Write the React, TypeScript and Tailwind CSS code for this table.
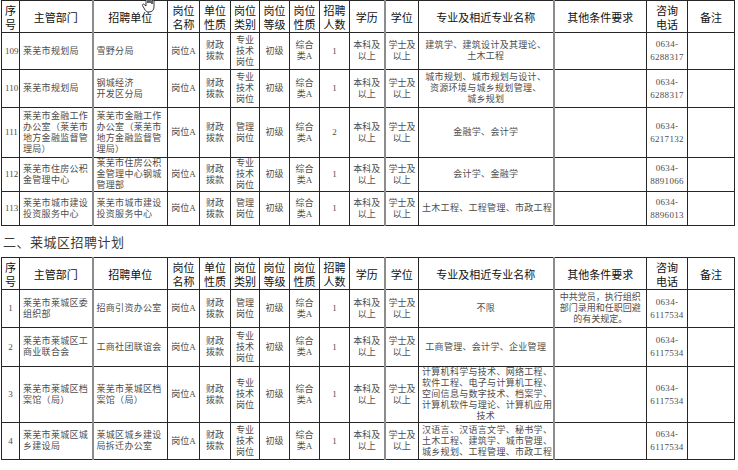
import type { ReactNode } from 'react';

type Row = {
  seq: string;
  dept: string[];
  unit: string[];
  kind: string[];
  count: string;
  major: string[];
  other?: string[];
  phone: string;
  h: string;
};

const plan1: Row[] = [
  { seq: '109', dept: ['莱芜市规划局'], unit: ['雪野分局'], kind: ['专业', '技术', '岗位'], count: '1', major: ['建筑学、建筑设计及其理论、', '土木工程'], phone: '6288317', h: 'h-[37px]' },
  { seq: '110', dept: ['莱芜市规划局'], unit: ['钢城经济', '开发区分局'], kind: ['专业', '技术', '岗位'], count: '1', major: ['城市规划、城市规划与设计、', '资源环境与城乡规划管理、', '城乡规划'], phone: '6288317', h: 'h-[38px]' },
  { seq: '111', dept: ['莱芜市金融工作', '办公室（莱芜市', '地方金融监督管', '理局）'], unit: ['莱芜市金融工作', '办公室（莱芜市', '地方金融监督管', '理局）'], kind: ['管理', '岗位'], count: '2', major: ['金融学、会计学'], phone: '6217132', h: 'h-[50px]' },
  { seq: '112', dept: ['莱芜市住房公积', '金管理中心'], unit: ['莱芜市住房公积', '金管理中心钢城', '管理部'], kind: ['专业', '技术', '岗位'], count: '1', major: ['会计学、金融学'], phone: '8891066', h: 'h-[33px]' },
  { seq: '113', dept: ['莱芜市城市建设', '投资服务中心'], unit: ['莱芜市城市建设', '投资服务中心'], kind: ['管理', '岗位'], count: '1', major: ['土木工程、工程管理、市政工程'], phone: '8896013', h: 'h-[34px]' },
];

const plan2: Row[] = [
  { seq: '1', dept: ['莱芜市莱城区委', '组织部'], unit: ['招商引资办公室'], kind: ['管理', '岗位'], count: '1', major: ['不限'], other: ['中共党员，执行组织', '部门录用和任职回避', '的有关规定。'], phone: '6117534', h: 'h-[38px]' },
  { seq: '2', dept: ['莱芜市莱城区工', '商业联合会'], unit: ['工商社团联谊会'], kind: ['专业', '技术', '岗位'], count: '1', major: ['工商管理、会计学、企业管理'], phone: '6117534', h: 'h-[39px]' },
  { seq: '3', dept: ['莱芜市莱城区档', '案馆（局）'], unit: ['莱芜市莱城区档', '案馆（局）'], kind: ['专业', '技术', '岗位'], count: '1', major: ['计算机科学与技术、网络工程、', '软件工程、电子与计算机工程、', '空间信息与数字技术、档案学、', '计算机软件与理论、计算机应用', '技术'], phone: '6117534', h: 'h-[56px]' },
  { seq: '4', dept: ['莱芜市莱城区城', '乡建设局'], unit: ['莱城区城乡建设', '局拆迁办公室'], kind: ['专业', '技术', '岗位'], count: '1', major: ['汉语言、汉语言文学、秘书学、', '土木工程、建筑学、城市管理、', '城乡规划、工程管理、市政工程'], phone: '6117534', h: 'h-[37px]' },
];

const head = [
  ['序', '号'], ['主管部门'], ['招聘单位'], ['岗位', '名称'], ['单位', '性质'], ['岗位', '类别'], ['岗位', '等级'],
  ['岗位', '性质'], ['招聘', '人数'], ['学历'], ['学位'], ['专业及相近专业名称'], ['其他条件要求'], ['咨询', '电话'], ['备注'],
];

const thick = 'border-l-2 border-l-[#8c8c8c]';

function Lines({ lines }: { lines: string[] }) {
  return (
    <>
      {lines.map((l, i) => (
        <div key={i} className="whitespace-nowrap">{l}</div>
      ))}
    </>
  );
}

function Td({ children, className = '' }: { children?: ReactNode; className?: string }) {
  return <td className={`border border-[#262626] px-[3px] py-0 align-middle whitespace-nowrap ${className}`}>{children}</td>;
}

function Plan({ rows }: { rows: Row[] }) {
  return (
    <table className="ml-[1px] w-[733px] table-fixed border-collapse">
      <colgroup>
        <col className="w-[18px]" />
        <col className="w-[73px]" />
        <col className="w-[75px]" />
        <col className="w-[32px]" />
        <col className="w-[31px]" />
        <col className="w-[29px]" />
        <col className="w-[30px]" />
        <col className="w-[30px]" />
        <col className="w-[30px]" />
        <col className="w-[35px]" />
        <col className="w-[34px]" />
        <col className="w-[135px]" />
        <col className="w-[93px]" />
        <col className="w-[41px]" />
        <col className="w-[47px]" />
      </colgroup>
      <thead>
        <tr className="h-[32px] text-[11px] leading-[14px] text-[#111] font-['Noto_Sans_CJK_SC',sans-serif]">
          {head.map((h, i) => (
            <Td key={i} className={`px-0 text-center ${i === 2 || i === 10 || i === 12 ? thick : ''}`}>
              <Lines lines={h} />
            </Td>
          ))}
        </tr>
      </thead>
      <tbody className="text-[9px] leading-[11px] text-[#4d4d4d]">
        {rows.map((r) => (
          <tr key={r.seq} className={r.h}>
            <Td className="px-0 text-center">{r.seq}</Td>
            <Td className="tracking-[0.3px]"><Lines lines={r.dept} /></Td>
            <Td className={`tracking-[0.3px] ${thick}`}><Lines lines={r.unit} /></Td>
            <Td className="px-0 text-center">岗位A</Td>
            <Td className="px-0 text-center"><Lines lines={['财政', '拨款']} /></Td>
            <Td className="px-0 text-center"><Lines lines={r.kind} /></Td>
            <Td className="px-0 text-center">初级</Td>
            <Td className="px-0 text-center"><Lines lines={['综合', '类A']} /></Td>
            <Td className="px-0 text-center">{r.count}</Td>
            <Td className="px-0 text-center"><Lines lines={['本科及', '以上']} /></Td>
            <Td className={`px-0 text-center ${thick}`}><Lines lines={['学士及', '以上']} /></Td>
            <Td className="px-[2px] text-center tracking-[0.3px]"><Lines lines={r.major} /></Td>
            <Td className={`text-center ${thick}`}>{r.other && <Lines lines={r.other} />}</Td>
            <Td className="px-0 text-center leading-[13px] tracking-[0.3px]"><Lines lines={['0634-', r.phone]} /></Td>
            <Td />
          </tr>
        ))}
      </tbody>
    </table>
  );
}

function HandCursor() {
  return (
    <svg className="absolute left-[141px] top-[-5px]" width="18" height="20" viewBox="0 0 18 20">
      <path
        d="M5 2 C5 0.8 7 0.8 7 2 L7 8 L7 3 C7 1.8 9 1.8 9 3 L9 8 L9 4 C9 2.8 11 2.8 11 4 L11 9 L11 6 C11 4.8 13 4.8 13 6 L13 12 C13 15 11 17 8 17 C5.5 17 4.5 16 3.5 14 L1.5 10.5 C1 9.5 2.3 8.6 3.1 9.4 L5 11 Z"
        fill="#fff"
        stroke="#222"
        strokeWidth="0.9"
        strokeLinejoin="round"
      />
    </svg>
  );
}

export default function App() {
  return (
    <div
      className="relative h-[470px] w-[738px] overflow-hidden bg-white"
      style={{ fontFamily: '"Liberation Serif", "Noto Sans CJK SC", serif' }}
    >
      <Plan rows={plan1} />
      <div className="flex h-[31px] items-center pl-[3px] pt-[3px] text-[13px] tracking-[0.5px] text-[#3a3a3a]">
        二、莱城区招聘计划
      </div>
      <Plan rows={plan2} />
      <HandCursor />
    </div>
  );
}
